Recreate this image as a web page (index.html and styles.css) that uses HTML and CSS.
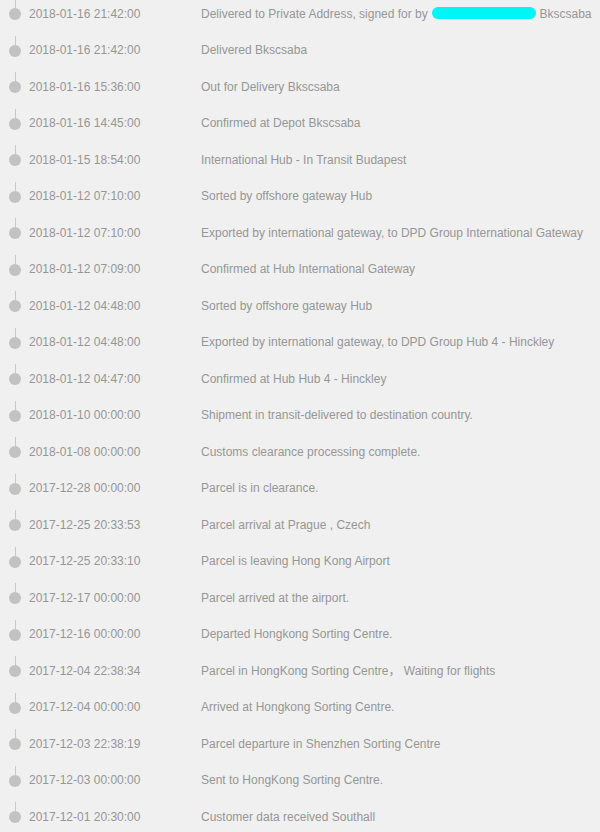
FILE: index.html
```html
<!DOCTYPE html>
<html>
<head>
<meta charset="utf-8">
<link rel="stylesheet" href="styles.css">
</head>
<body>
<ul class="track">
<li class="row"><span class="mark"></span><span class="time">2018-01-16 21:42:00</span><span class="desc">Delivered to Private Address, signed for by <span class="redact"></span> Bkscsaba</span></li>
<li class="row"><span class="mark"></span><span class="time">2018-01-16 21:42:00</span><span class="desc">Delivered Bkscsaba</span></li>
<li class="row"><span class="mark"></span><span class="time">2018-01-16 15:36:00</span><span class="desc">Out for Delivery Bkscsaba</span></li>
<li class="row"><span class="mark"></span><span class="time">2018-01-16 14:45:00</span><span class="desc">Confirmed at Depot Bkscsaba</span></li>
<li class="row"><span class="mark"></span><span class="time">2018-01-15 18:54:00</span><span class="desc">International Hub - In Transit Budapest</span></li>
<li class="row"><span class="mark"></span><span class="time">2018-01-12 07:10:00</span><span class="desc">Sorted by offshore gateway Hub</span></li>
<li class="row"><span class="mark"></span><span class="time">2018-01-12 07:10:00</span><span class="desc">Exported by international gateway, to DPD Group International Gateway</span></li>
<li class="row"><span class="mark"></span><span class="time">2018-01-12 07:09:00</span><span class="desc">Confirmed at Hub International Gateway</span></li>
<li class="row"><span class="mark"></span><span class="time">2018-01-12 04:48:00</span><span class="desc">Sorted by offshore gateway Hub</span></li>
<li class="row"><span class="mark"></span><span class="time">2018-01-12 04:48:00</span><span class="desc">Exported by international gateway, to DPD Group Hub 4 - Hinckley</span></li>
<li class="row"><span class="mark"></span><span class="time">2018-01-12 04:47:00</span><span class="desc">Confirmed at Hub Hub 4 - Hinckley</span></li>
<li class="row"><span class="mark"></span><span class="time">2018-01-10 00:00:00</span><span class="desc">Shipment in transit-delivered to destination country.</span></li>
<li class="row"><span class="mark"></span><span class="time">2018-01-08 00:00:00</span><span class="desc">Customs clearance processing complete.</span></li>
<li class="row"><span class="mark"></span><span class="time">2017-12-28 00:00:00</span><span class="desc">Parcel is in clearance.</span></li>
<li class="row"><span class="mark"></span><span class="time">2017-12-25 20:33:53</span><span class="desc">Parcel arrival at Prague , Czech</span></li>
<li class="row"><span class="mark"></span><span class="time">2017-12-25 20:33:10</span><span class="desc">Parcel is leaving Hong Kong Airport</span></li>
<li class="row"><span class="mark"></span><span class="time">2017-12-17 00:00:00</span><span class="desc">Parcel arrived at the airport.</span></li>
<li class="row"><span class="mark"></span><span class="time">2017-12-16 00:00:00</span><span class="desc">Departed Hongkong Sorting Centre.</span></li>
<li class="row"><span class="mark"></span><span class="time">2017-12-04 22:38:34</span><span class="desc">Parcel in HongKong Sorting Centre， Waiting for flights</span></li>
<li class="row"><span class="mark"></span><span class="time">2017-12-04 00:00:00</span><span class="desc">Arrived at Hongkong Sorting Centre.</span></li>
<li class="row"><span class="mark"></span><span class="time">2017-12-03 22:38:19</span><span class="desc">Parcel departure in Shenzhen Sorting Centre</span></li>
<li class="row"><span class="mark"></span><span class="time">2017-12-03 00:00:00</span><span class="desc">Sent to HongKong Sorting Centre.</span></li>
<li class="row"><span class="mark"></span><span class="time">2017-12-01 20:30:00</span><span class="desc">Customer data received Southall</span></li>
</ul>
</body>
</html>
```
FILE: styles.css
```css
html, body {
  margin: 0;
  padding: 0;
  background: #f0f0f0;
}
body {
  font-family: "Liberation Sans", Arial, "Noto Sans CJK SC", sans-serif;
  font-size: 12px;
  color: #969696;
  overflow: hidden;
}
.track {
  list-style: none;
  margin: -4.5px 0 0 0;
  padding: 0;
}
.row {
  display: flex;
  align-items: center;
  height: 36.5px;
  line-height: 14px;
  white-space: nowrap;
}
.mark {
  position: relative;
  flex: none;
  width: 12px;
  height: 12px;
  margin-left: 9px;
  margin-right: 8px;
  margin-top: 1px;
  border-radius: 50%;
  background: #c2c2c2;
}
.mark::before {
  content: "";
  position: absolute;
  left: 5.5px;
  top: -9px;
  width: 1px;
  height: 9px;
  background: #c8c8c8;
}
.time {
  flex: none;
  width: 172px;
}
.desc {
  flex: none;
}
.redact {
  display: inline-block;
  width: 104px;
  height: 12px;
  margin-left: 1px;
  border-radius: 6px;
  background: #00f5f5;
  vertical-align: -1px;
}
```
